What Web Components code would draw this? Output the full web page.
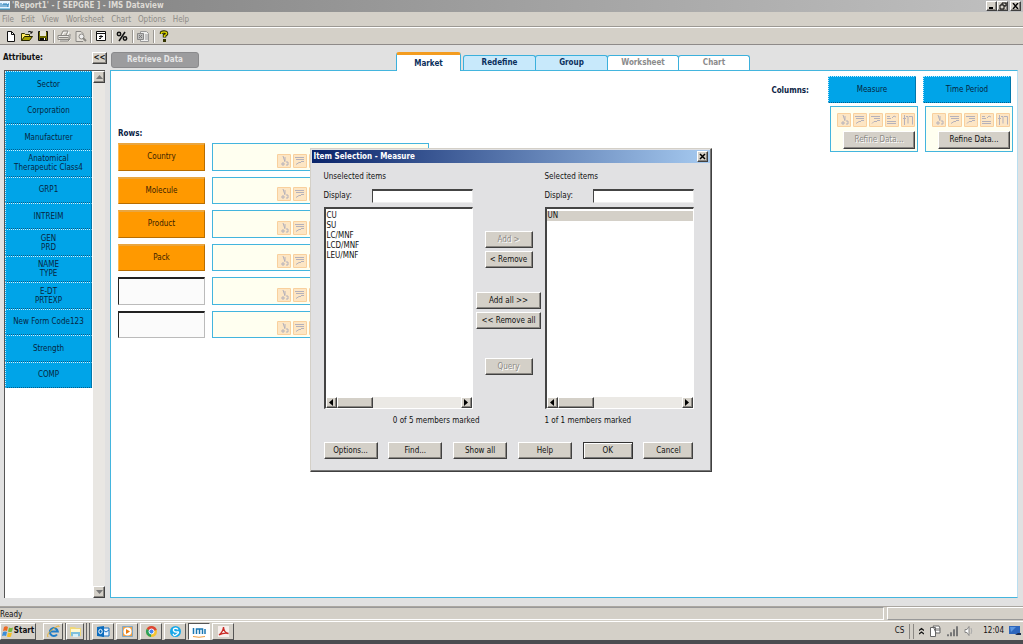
<!DOCTYPE html>
<html lang="en">
<head>
<meta charset="utf-8">
<title>IMS Dataview</title>
<style>
  html, body { margin: 0; height: 100%; }
  body { font: 8px/10px "DejaVu Sans Condensed", "DejaVu Sans", sans-serif; color: #111; overflow: hidden; }
</style>
</head>
<body>
<ims-app></ims-app>
<script>
const define = (name, html, setup) => {
  const tpl = document.createElement('template');
  tpl.innerHTML = html;
  customElements.define(name, class extends HTMLElement {
    constructor() {
      super();
      this.attachShadow({ mode: 'open' }).append(tpl.content.cloneNode(true));
    }
    connectedCallback() { if (setup) setup(this, this.shadowRoot); }
  });
};

/* Raised grey push button */
define('win-button', `
<style>
  :host { display: block; height: 18px; }
  button { display: flex; align-items: center; justify-content: center; width: 100%; height: 100%; margin: 0; padding: 0;
    box-sizing: border-box; font: inherit; color: #111; background: #d4d0c8; white-space: nowrap;
    border: 1px solid; border-color: #fff #404040 #404040 #fff; box-shadow: inset -1px -1px #8a8782; }
  button:disabled { color: #8c8a86; text-shadow: 1px 1px #fff; }
  :host([default]) button { border-color: #333; box-shadow: inset 1px 1px #fff, inset -1px -1px #777; }
</style>
<button><slot></slot></button>`, (el, root) => {
  const b = root.querySelector('button');
  b.disabled = el.hasAttribute('disabled');
  if (el.hasAttribute('label')) b.setAttribute('aria-label', el.getAttribute('label'));
});

define('title-bar', `
<style>
  :host { display: flex; align-items: center; gap: 2px; height: 12px; padding-right: 2px; background: linear-gradient(90deg, #808080, #c0c0c0); color: #dedbd5;
    font: bold 8px/12px "DejaVu Sans Condensed", "DejaVu Sans", sans-serif; }
  svg { display: block; }
  h1 { flex: 1; margin: 0; font: inherit; }
  div { display: flex; }
  win-button { width: 11px; height: 10px; }
  win-button:last-child { margin-left: 2px; }
</style>
<svg width="10" height="10" viewBox="0 0 10 10"><rect width="10" height="8" fill="#e9f5ff"/><path d="M1 2v4M3 6V3h2v3M5 3h2v3M9 3h-1v3" stroke="#1b78b4" fill="none"/><path d="M0 8h10" stroke="#2a9ad0"/></svg>
<h1>'Report1' - [ SEPGRE ] - IMS Dataview</h1>
<div>
  <win-button label="Minimize"><svg width="7" height="6"><path d="M1 5h4" stroke="#000" stroke-width="2"/></svg></win-button>
  <win-button label="Restore"><svg width="8" height="8"><path d="M3 3V1h4v3H5M2 3h3v4H1V3z" stroke="#000" fill="none"/></svg></win-button>
  <win-button label="Close"><svg width="7" height="6"><path d="M1 0l5 6M6 0L1 6" stroke="#000" stroke-width="1.4"/></svg></win-button>
</div>`);

define('menu-bar', `
<style>
  :host { display: block; background: #d4d0c8; border-bottom: 1px solid #9b9893; }
  nav { display: flex; gap: 7px; height: 12px; padding: 2px 0 0 2px; align-items: center; }
  a { color: #8c8a86; text-decoration: none; }
</style>
<nav><a href="#">File</a><a href="#">Edit</a><a href="#">View</a><a href="#">Worksheet</a><a href="#">Chart</a><a href="#">Options</a><a href="#">Help</a></nav>`);

define('tool-bar', `
<style>
  :host { display: flex; align-items: center; height: 16px; padding-left: 3px; background: #d4d0c8; border-top: 1px solid #fff; border-bottom: 1px solid #8e8a88; }
  button { width: 16px; height: 16px; padding: 0; border: 0; background: none; display: grid; place-items: center; }
  i { width: 1px; height: 13px; margin: 0 2px; background: #9b9893; box-shadow: 1px 0 #fff; }
  svg { display: block; }
</style>
<button aria-label="New"><svg width="12" height="12"><path d="M2.5 1.5h4l3 3v7h-7z" fill="#fff" stroke="#111"/><path d="M6.500 1.500v3h3" fill="none" stroke="#111"/></svg></button>
<button aria-label="Open"><svg width="14" height="12"><path d="M1.500 10.500v-7h3l1 1h4v2" fill="#ffec60" stroke="#333300"/><path d="M1.500 10.500l3-4h8l-3 4z" fill="#a8a000" stroke="#222200"/><path d="M8 2q2-2 4 1M12 1v2h-2" fill="none" stroke="#111"/></svg></button>
<button aria-label="Save"><svg width="12" height="12"><path d="M1.500 1.500h9v9h-9z" fill="#6d6b00" stroke="#111"/><path d="M3 1h6v5H3z" fill="#e6e5da"/><path d="M3 8h6v3H3z" fill="#111"/><path d="M7 8h1v2H7z" fill="#fff"/></svg></button>
<i></i>
<button aria-label="Print"><svg width="14" height="12"><g fill="none" stroke="#fff" transform="translate(1 1)"><path d="M4 5l2-4h5l-2 4M1 5h11v4H1z"/></g><g fill="none" stroke="#8a8884"><path d="M4 5l2-4h5L9 5M1 5.500h11v4H1zM2 7.500h9M3 11h8l2-2V4"/></g></svg></button>
<button aria-label="Print preview"><svg width="13" height="12"><path d="M9 11.500H2v-10h5l2 2v1" fill="#e4e1db" stroke="#8a8884"/><circle cx="7.500" cy="6.500" r="2.500" fill="#eee" stroke="#8a8884"/><path d="M9 8l3 3" stroke="#8a8884" stroke-width="2"/></svg></button>
<i></i>
<button aria-label="Properties"><svg width="12" height="12"><path d="M1.500 1.500h9v9h-9z" fill="#fff" stroke="#111"/><path d="M1 3.500h10M4 6.500h4M6 5v3M4 8.500h2" stroke="#111"/></svg></button>
<i></i>
<button aria-label="Percent"><svg width="12" height="12"><g fill="none" stroke="#111" stroke-width="1.500"><circle cx="3" cy="4" r="1.700"/><circle cx="9" cy="8.500" r="1.700"/><path d="M9 2l-6 9"/></g></svg></button>
<i></i>
<button aria-label="Export"><svg width="14" height="12"><path d="M4.500 1.500h6l2 2v8h-8z" fill="#eee" stroke="#999"/><path d="M1.500 3.500h6v6h-6z" fill="#bbb" stroke="#888"/><path d="M3 5l3 3M6 5L3 8" stroke="#777"/><path d="M9 5h3M9 7h3M9 9h3" stroke="#999"/></svg></button>
<i></i>
<button aria-label="Help"><svg width="12" height="12"><path d="M3.500 4V3q0-1 2.500-1t2.500 1v1q-.5 1-2 1.500v2" fill="none" stroke="#222200" stroke-width="3.400"/><path d="M3.500 4V3q0-1 2.500-1t2.500 1v1q-.5 1-2 1.500v1.500" fill="none" stroke="#d8d000" stroke-width="1.600"/><path d="M5 9h3v3H5z" fill="#333300"/></svg></button>`);

/* Attribute pane with its scroll bar */
define('attribute-pane', `
<style>
  :host { display: flex; flex-direction: column; width: 108px; }
  header { display: flex; justify-content: space-between; align-items: center; padding: 6px 1px 6px 3px; height: 13px; font: bold 8px/13px "DejaVu Sans Condensed", "DejaVu Sans", sans-serif; }
  h2 { margin: 0; font: inherit; }
  header win-button { width: 15px; height: 12px; }
  .list { flex: 1; display: flex; margin: 0 3px 0 4px; background: #fff; border-top: 1px solid #555; border-left: 1px solid #555; }
  .items { flex: 1; display: grid; grid-template-rows: repeat(12, 1fr); height: 317px; }
  .items button { padding: 0; font: inherit; line-height: 9px; color: #07263f; background: #00a4e8; border: 1px dotted #cdf0ff; border-right: 1px solid #0077ab; border-bottom: 1px dotted #005d8c; }
  .bar { width: 12px; margin-left: 1px; display: flex; flex-direction: column; justify-content: space-between; background: #e9e7e3; }
  .bar win-button { height: 12px; }
</style>
<header><h2>Attribute:</h2><win-button>&lt;&lt;</win-button></header>
<div class="list">
  <div class="items">
    <button>Sector</button><button>Corporation</button><button>Manufacturer</button><button>Anatomical<br>Therapeutic Class4</button>
    <button>GRP1</button><button>INTREIM</button><button>GEN<br>PRD</button><button>NAME<br>TYPE</button>
    <button>E-DT<br>PRTEXP</button><button>New Form Code123</button><button>Strength</button><button>COMP</button>
  </div>
  <div class="bar">
    <win-button label="Scroll up"><svg width="7" height="4"><path d="M0 4l3.500-4L7 4z" fill="#777"/></svg></win-button>
    <win-button label="Scroll down"><svg width="7" height="4"><path d="M0 0h7L3.500 4z" fill="#777"/></svg></win-button>
  </div>
</div>`);

define('tab-strip', `
<style>
  :host { display: flex; align-items: flex-end; height: 25px; font: bold 8px/14px "DejaVu Sans Condensed", "DejaVu Sans", sans-serif; }
  .retrieve { width: 88px; height: 16px; margin: 0 auto 2px 1px; padding: 0; font: inherit; color: #e6e6e6; background: #9c9c9e; border: 1px solid #8a8a8c; border-radius: 3px; }
  nav { display: flex; align-items: flex-end; margin-right: 269px; }
  a { box-sizing: border-box; width: 73px; height: 15px; text-align: center; text-decoration: none; color: #0a2f5c; background: #c8e9fb; border: 1px solid #3bb0dc; border-bottom: 0; border-radius: 3px 3px 0 0; margin-right: -1px; }
  a.on { width: 65px; height: 19px; margin: 0 2px -1px 0; line-height: 18px; background: #fff; border-top: 3px solid #f39c1f; position: relative; }
  a.off { background: #fff; color: #8b8b8b; width: 72px; }
</style>
<button class="retrieve" disabled>Retrieve Data</button>
<nav><a class="on" href="#">Market</a><a href="#">Redefine</a><a href="#">Group</a><a class="off" href="#">Worksheet</a><a class="off" href="#">Chart</a></nav>`);

/* Five disabled tool icons shown in every drop box */
define('refine-icons', `
<style>
  :host { display: flex; gap: 2px; }
  svg { width: 14px; height: 14px; background: #fde6c4; outline: 1px solid #f9d09d; outline-offset: -1px; border-radius: 1px; fill: none; stroke: #b5b1ba; }
</style>
<svg><path d="M6 2l2 6M8 3v4M5 9h2v2H5zM9 8h2v3H9"/></svg>
<svg><path d="M2 3.500h9M3 5.500h8M8 7.500h3M3 10.500l3-2h2"/></svg>
<svg><path d="M2 3.500h9M5 5.500h6M8 7.500h3M3 10.500l2-2h3"/></svg>
<svg><path d="M2 3.500h3M2 5.500h4M7 5l2-2 2 1M2 8.500h9M2 10.500h9"/></svg>
<svg><path d="M3.500 2v10M5 3.500h2v7M8 3.500h3.500v8M2 5.500h3"/></svg>`);

/* Chip for a dimension; the kind attribute picks its colour */
define('dimension-chip', `
<style>
  :host { display: block; }
  button { width: 100%; height: 100%; padding: 0; font: inherit; color: #3a2200; background: #ff9900; border: 1px solid; border-color: #ffb84d #b86d00 #b86d00 #ffb84d; border-top: 2px solid #e9a640; }
  :host([kind=empty]) button { background: #fbfbfb; border: 1px solid; border-color: #222 #bbb #bbb #222; border-top-width: 2px; }
  :host([kind=blue]) button { color: #07263f; background: #00a4e8; border: 1px dotted #bfeaff; border-right: 1px solid #0077ab; border-bottom: 1px dotted #005d8c; }
</style>
<button><slot></slot></button>`, (el, root) => {
  if (el.getAttribute('kind') === 'empty') root.querySelector('button').setAttribute('aria-label', 'Empty row');
});

define('drop-box', `
<style>:host { display: flex; box-sizing: border-box; background: #fffff0; border: 1px solid #43b5de; }</style>
<slot></slot>`);

define('market-panel', `
<style>
  :host { display: flex; justify-content: space-between; align-items: flex-start; flex: 1; box-sizing: border-box; background: #fff; border: 1px solid #43b5de; border-right-color: #b9def0; padding: 0 6px 0 7px; }
  h3 { margin: 0; font: bold 8px/10px "DejaVu Sans Condensed", "DejaVu Sans", sans-serif; color: #0a2344; }
  .rows { padding-top: 58px; }
  .rows div { display: grid; grid-template-columns: 87px 217px; grid-template-rows: repeat(6, 1fr); gap: 6px 7px; height: 195px; margin-top: 4px; }
  .rows drop-box { align-items: flex-end; padding: 0 0 2px 64px; }
  .cols { display: grid; grid-template-columns: auto 88px 88px; column-gap: 7px; padding-top: 5px; }
  .cols h3 { padding: 10px 12px 0 0; }
  dimension-chip { min-height: 27px; }
  .cols drop-box { grid-row: 2; flex-direction: column; align-items: flex-end; gap: 4px; height: 46px; margin: 3px -2px 0 2px; padding: 6px 2px 0 0; }
  .m { grid-column: 2; } .t { grid-column: 3; }
  .cols win-button { width: 72px; height: 18px; }
</style>
<section class="rows">
  <h3>Rows:</h3>
  <div>
    <dimension-chip>Country</dimension-chip><drop-box><refine-icons></refine-icons></drop-box>
    <dimension-chip>Molecule</dimension-chip><drop-box><refine-icons></refine-icons></drop-box>
    <dimension-chip>Product</dimension-chip><drop-box><refine-icons></refine-icons></drop-box>
    <dimension-chip>Pack</dimension-chip><drop-box><refine-icons></refine-icons></drop-box>
    <dimension-chip kind="empty"></dimension-chip><drop-box><refine-icons></refine-icons></drop-box>
    <dimension-chip kind="empty"></dimension-chip><drop-box><refine-icons></refine-icons></drop-box>
  </div>
</section>
<section class="cols">
  <h3>Columns:</h3>
  <dimension-chip kind="blue">Measure</dimension-chip>
  <dimension-chip kind="blue">Time Period</dimension-chip>
  <drop-box class="m"><refine-icons></refine-icons><win-button disabled>Refine Data...</win-button></drop-box>
  <drop-box class="t"><refine-icons></refine-icons><win-button>Refine Data...</win-button></drop-box>
</section>`);

/* Titled list with its filter field; options come from the items attribute */
define('member-list', `
<style>
  :host { display: flex; flex-direction: column; }
  .filter { display: flex; justify-content: space-between; align-items: center; margin: 7px 0 4px; }
  input { box-sizing: border-box; width: 101px; height: 14px; padding: 0 2px; font: inherit; background: #fff; border: 1px solid; border-color: #444 #eee #eee #444; border-top-width: 2px; outline: 0; border-radius: 0; }
  .box { box-sizing: border-box; height: 202px; display: flex; flex-direction: column; background: #fff; border: 1px solid; border-color: #444 #fff #fff #444; border-top-width: 2px; border-left-width: 2px; }
  select { flex: 1; min-height: 0; padding: 2px 0 0; border: 0; outline: 0; overflow: hidden; background: #fff; font: inherit; border-radius: 0; }
  option { padding: 0 1px; min-height: 10px; height: 10px; line-height: 10px; color: #111; }
  option:checked { background: linear-gradient(#d4d0c8, #d4d0c8); color: #111; }
  .bar { display: flex; height: 11px; background: #ebe9e5; }
  .bar win-button { width: 11px; height: 11px; }
  .bar .thumb { width: 36px; margin-right: auto; }
  .bar svg { display: block; }
</style>
<div id="title"><slot></slot></div>
<div class="filter"><label for="f">Display:</label><input id="f" type="text"></div>
<div class="box">
  <select multiple aria-labelledby="title"></select>
  <div class="bar">
    <win-button label="Scroll left"><svg width="4" height="7"><path d="M4 0v7L0 3.500z"/></svg></win-button>
    <win-button class="thumb" label="Scroll thumb"></win-button>
    <win-button label="Scroll right"><svg width="4" height="7"><path d="M0 0v7l4-3.500z"/></svg></win-button>
  </div>
</div>`, (el, root) => {
  const s = root.querySelector('select');
  if (s.options.length) return;
  for (const name of el.getAttribute('items').split(',')) s.add(new Option(name, name, false, el.hasAttribute('marked')));
});

define('item-dialog', `
<style>
  :host { display: block; box-sizing: border-box; width: 402px; padding: 1px; background: #e1e1e3; border: 1px solid; border-color: #d4d0c8 #404040 #404040 #d4d0c8; box-shadow: inset -1px -1px #777; }
  header { display: flex; align-items: center; justify-content: space-between; height: 13px; padding: 0 2px; color: #fff; background: linear-gradient(90deg, #0a246a, #a6caf0); }
  h2 { margin: 0; font: bold 8px/13px "DejaVu Sans Condensed", "DejaVu Sans", sans-serif; }
  header win-button { width: 11px; height: 11px; }
  .body { padding: 9px 16px 11px 12px; }
  .pick { display: grid; grid-template-columns: 149px 65px 149px; justify-content: space-between; }
  .moves { display: flex; flex-direction: column; align-items: center; gap: 3px; padding-top: 59px; }
  .moves win-button { width: 48px; height: 17px; }
  .moves .wide { width: 65px; }
  .all { margin-top: 21px; } .query { margin-top: 26px; }
  .counts { display: grid; grid-template-columns: 156px 149px; justify-content: space-between; margin-top: 7px; }
  .counts span:first-child { text-align: right; }
  footer { display: grid; grid-template-columns: repeat(4, 54px) 50px 50px; justify-content: space-between; margin-top: 16px; }
  footer win-button { height: 17px; }
</style>
<header><h2>Item Selection - Measure</h2><win-button label="Close"><svg width="7" height="7"><path d="M1 1l5 5M6 1L1 6" stroke="#000" stroke-width="1.500"/></svg></win-button></header>
<div class="body">
  <div class="pick">
    <member-list items="CU,SU,LC/MNF,LCD/MNF,LEU/MNF">Unselected items</member-list>
    <div class="moves">
      <win-button disabled>Add &gt;</win-button>
      <win-button>&lt; Remove</win-button>
      <win-button class="wide all">Add all &gt;&gt;</win-button>
      <win-button class="wide">&lt;&lt; Remove all</win-button>
      <win-button class="query" disabled>Query</win-button>
    </div>
    <member-list items="UN" marked>Selected items</member-list>
  </div>
  <div class="counts"><span>0 of 5 members marked</span><span>1 of 1 members marked</span></div>
  <footer>
    <win-button>Options...</win-button><win-button>Find...</win-button><win-button>Show all</win-button>
    <win-button>Help</win-button><win-button default>OK</win-button><win-button>Cancel</win-button>
  </footer>
</div>`);

define('status-bar', `
<style>
  :host { display: flex; gap: 3px; height: 14px; background: #d4d0c8; border-top: 1px solid #aaa6a0; }
  div { box-sizing: border-box; height: 13px; line-height: 13px; border: 1px solid; }
  .message { flex: 1; border-color: #999 #fff #fff #999; border-left: 0; }
  .pane { width: 136px; border-color: #fff #999 #999 #fff; border-right: 0; }
</style>
<div class="message">Ready</div><div class="pane"></div>`);

define('task-bar', `
<style>
  :host { display: flex; align-items: center; height: 18px; background: #d4d0c8; border-top: 1px solid #fff; border-bottom: 4px solid #4c4c50; }
  button { display: flex; align-items: center; justify-content: center; height: 17px; width: 22px; margin-right: 2px; padding: 0; box-sizing: border-box; font: inherit; color: #111; background: #d4d0c8; border: 1px solid; border-color: #fff #555 #555 #fff; }
  svg { display: block; flex: none; }
  .start { width: 36px; margin-right: 7px; gap: 1px; font: bold 8px/12px "DejaVu Sans Condensed", "DejaVu Sans", sans-serif; }
  .stack { box-shadow: 2px 0 #d4d0c8, 3px 0 #666; margin-right: 3px; width: 20px; }
  .stack2 { box-shadow: 2px 0 #d4d0c8, 3px 0 #666, 5px 0 #d4d0c8, 6px 0 #666; margin-right: 8px; width: 18px; }
  .on { background: #fff; border-color: #555 #fff #fff #555; }
  .tray { display: flex; align-items: center; gap: 5px; margin-left: auto; padding-right: 2px; }
  .sep { width: 3px; height: 15px; border: solid #8b8883; border-width: 0 1px; }
  time { margin-left: 5px; }
</style>
<button class="start"><svg width="11" height="12"><path d="M2 2q2-1.500 4 0L5 6Q3 5 1 6z" fill="#ec6a24"/><path d="M7 2.500q2 1 4 0L10 6.500q-2 1-4 0z" fill="#7ab83a"/><path d="M1 7q2-1 4 0l-1 4q-2-1-4 0z" fill="#3c8ed8"/><path d="M6 7.500q2 1 4 0l-1 4q-2 1-4 0z" fill="#f5bf27"/></svg>Start</button>
<button class="stack" aria-label="Internet Explorer"><svg width="13" height="13"><path d="M10 9.500a4 4 0 1 1 .8-3H4" fill="none" stroke="#1e7cc8" stroke-width="2"/><path d="M1 12Q-1 9 6 4t6-2" fill="none" stroke="#e8b030"/></svg></button>
<button class="stack2" aria-label="Explorer"><svg width="13" height="13"><path d="M1 2h5l1 1h5v8H1z" fill="#f0d878"/><path d="M2 4h9v3H2z" fill="#fff8d0"/><path d="M2 7h9v4H2z" fill="#7fc0dc"/><path d="M4 9h5v3H4z" fill="#d8f0f8"/></svg></button>
<button aria-label="Outlook"><svg width="14" height="13"><path d="M6 3h7v8H6z" fill="#e8f3ff" stroke="#1870c0"/><path d="M7 5l3 2 3-2" fill="none" stroke="#1870c0"/><path d="M1 2l7-1v11l-7-1z" fill="#0b6cbe"/><ellipse cx="4.500" cy="6.500" rx="1.700" ry="2.200" fill="none" stroke="#fff"/></svg></button>
<button aria-label="Media player"><svg width="13" height="13"><path d="M1.500 1.500h10v10h-10z" fill="#f4a040" stroke="#7ca7c8"/><circle cx="6.500" cy="6.500" r="4" fill="#fff"/><path d="M5 4v5l4-2.500z" fill="#e97c10"/></svg></button>
<button aria-label="Chrome"><svg width="13" height="13"><circle cx="6.500" cy="6.500" r="5.500" fill="#f4c430"/><path d="M6.500 6.500L1.600 4A5.500 5.500 0 0 1 11.800 5z" fill="#db4437"/><path d="M6.500 6.500L1.600 4A5.500 5.500 0 0 0 6 12z" fill="#2ca05a"/><circle cx="6.500" cy="6.500" r="2.500" fill="#4285f4" stroke="#fff"/></svg></button>
<button aria-label="Skype"><svg width="13" height="13"><circle cx="6.500" cy="6.500" r="5.500" fill="#18a8e8"/><path d="M9 4.500Q8 3 6 3.300T4.500 5.500 8 7 8 9.300 4 8.800" fill="none" stroke="#fff" stroke-width="1.300"/></svg></button>
<button class="on" aria-label="IMS Dataview"><svg width="14" height="13"><path d="M1.500 3v6M4.500 9V4h3v5M7.500 4h3v5M13 4v5" fill="none" stroke="#1b78b4" stroke-width="1.500"/><path d="M1 11.500q6 1.500 12 0" fill="none" stroke="#ef9a3c"/></svg></button>
<button aria-label="Reader"><svg width="13" height="13"><path d="M1 1h11v11H1z" fill="#f6efed"/><path d="M2 10q4-3 4.500-8Q7 8 11.500 8.500 7 7.500 2 10z" fill="none" stroke="#c92a26" stroke-width="1.300"/></svg></button>
<div class="tray">
  <span>CS</span><span class="sep"></span>
  <svg width="5" height="8"><path d="M0 3.500l2.500-2 2.500 2M0 7l2.500-2L5 7" fill="none" stroke="#111" stroke-width="1.300"/></svg>
  <svg width="12" height="12"><path d="M1.500 2.500h5v9h-5zM4 1h6l1 2v5H7z" fill="#fff" stroke="#666"/><path d="M8 3v3M10 3v3" stroke="#666"/></svg>
  <svg width="13" height="12"><path d="M1.500 11V9.500h1V11zM4.500 11V7.500h1V11zM7.500 11V4.500h1V11zM10.500 11V1.500h1V11z" fill="#fff" stroke="#777"/></svg>
  <svg width="9" height="12"><path d="M1 4.500h2l2-3v9l-2-3H1z" fill="#fff" stroke="#888"/><path d="M7 3q1.500 3 0 6" fill="none" stroke="#aaa"/></svg>
  <time>12:04</time>
  <svg width="12" height="10"><path d="M0 0h11v8H0z" fill="#2d66bd"/><path d="M1 1h6L2 6z" fill="#5b96e0"/><path d="M6 9h6V7H9z" fill="#1c2c4c"/></svg>
</div>`);

define('ims-app', `
<style>
  :host { display: flex; flex-direction: column; height: 100vh; background: #e1e1e1; position: relative; }
  main { flex: 1; min-height: 0; display: flex; gap: 2px; padding: 0 5px 8px 0; }
  .work { flex: 1; display: flex; flex-direction: column; }
  item-dialog { position: absolute; top: 148px; left: calc(50% - 202px); }
</style>
<title-bar></title-bar>
<menu-bar></menu-bar>
<tool-bar></tool-bar>
<main>
  <attribute-pane></attribute-pane>
  <div class="work"><tab-strip></tab-strip><market-panel></market-panel></div>
</main>
<status-bar></status-bar>
<task-bar></task-bar>
<item-dialog role="dialog" aria-label="Item Selection - Measure"></item-dialog>`);
</script>
</body>
</html>
